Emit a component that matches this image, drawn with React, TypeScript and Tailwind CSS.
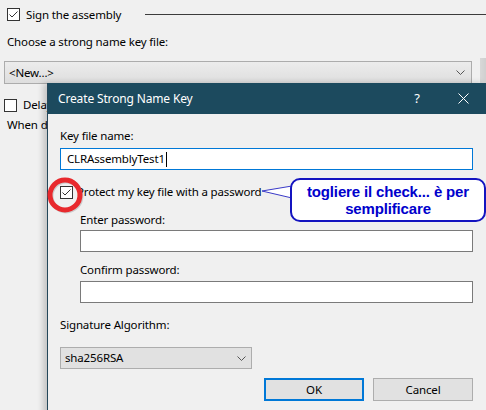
import React from 'react';

function Check({ checked = false }: { checked?: boolean }) {
  return (
    <div className="flex h-[13px] w-[13px] shrink-0 items-center justify-center border border-[#333333] bg-white">
      {checked && (
        <svg width="11" height="11" viewBox="0 0 11 11">
          <path d="M1.5 5.5 L4 8 L9.5 2.5" fill="none" stroke="#333333" strokeWidth="1" />
        </svg>
      )}
    </div>
  );
}

function Chevron() {
  return (
    <svg width="9" height="5" viewBox="0 0 9 5">
      <path d="M0.5 0.5 L4.5 4.5 L8.5 0.5" fill="none" stroke="#555555" strokeWidth="1" />
    </svg>
  );
}

function Dialog() {
  return (
    <div className="absolute left-[47px] top-[83px] h-[340px] w-[439px] border-l border-[#24475a] bg-[#f0f0f0] shadow-[-4px_0_6px_rgba(0,0,0,0.18)]">
      <div className="flex h-[31px] items-center bg-[#1c4a5e] pl-[10px] text-[12px] text-white">
        <span>Create Strong Name Key</span>
        <span className="ml-auto w-[46px] text-center text-[13px]">?</span>
        <span className="flex w-[46px] items-center justify-center">
          <svg width="11" height="11" viewBox="0 0 11 11">
            <path d="M0.5 0.5 L10.5 10.5 M10.5 0.5 L0.5 10.5" stroke="#ffffff" strokeWidth="1" />
          </svg>
        </span>
      </div>

      <div className="flex flex-col pl-[12px] pr-[13px]">
        <div className="mt-[14px] h-[16px] leading-[16px]">Key file name:</div>
        <div className="mt-[4px] flex h-[22px] items-center border border-[#0078d7] bg-white pl-[6px]">
          <span>CLRAssemblyTest1</span>
          <span className="ml-[1px] h-[15px] w-px bg-black" />
        </div>

        <div className="mt-[14px] flex h-[16px] items-center gap-[4px]">
          <Check checked />
          <span className="leading-[16px]">Protect my key file with a password</span>
        </div>

        <div className="ml-[20px] flex flex-col">
          <div className="mt-[12px] h-[16px] leading-[16px]">Enter password:</div>
          <div className="mt-[2px] h-[22px] border border-[#7a7a7a] bg-white" />
          <div className="mt-[10px] h-[16px] leading-[16px]">Confirm password:</div>
          <div className="mt-[3px] h-[22px] border border-[#7a7a7a] bg-white" />
        </div>

        <div className="mt-[14px] h-[16px] leading-[16px]">Signature Algorithm:</div>
        <div className="mt-[14px] flex h-[22px] w-[192px] items-center justify-between border border-[#adadad] bg-[#e1e1e1] pl-[4px] pr-[5px]">
          <span>sha256RSA</span>
          <Chevron />
        </div>

        <div className="mt-[9px] flex justify-end gap-[9px]">
          <div className="flex h-[23px] w-[100px] items-center justify-center border-2 border-[#0078d7] bg-[#e1e1e1]">OK</div>
          <div className="flex h-[23px] w-[100px] items-center justify-center border border-[#adadad] bg-[#e1e1e1]">Cancel</div>
        </div>
      </div>
    </div>
  );
}

function Callout() {
  return (
    <>
      <svg className="absolute left-[258px] top-[180px]" width="40" height="24" viewBox="0 0 40 24">
        <polygon points="4,11 34,6 34,18" fill="#ffffff" stroke="#3a3ac8" strokeWidth="1" />
      </svg>
      <div className="absolute left-[290px] top-[178px] flex h-[44px] w-[196px] flex-col items-center justify-center rounded-[10px] border-2 border-[#1414c0] bg-white font-['Liberation_Sans',Arial,sans-serif] text-[15px] font-bold leading-[17px] text-[#0000cc]">
        <span>togliere il check... è per</span>
        <span>semplificare</span>
      </div>
    </>
  );
}

export default function App() {
  return (
    <div className="relative h-[410px] w-[486px] overflow-hidden bg-[#f0f0f0] font-['Noto_Sans',sans-serif] text-[11.5px] tracking-[-0.15px] text-black">
      <div className="flex flex-col">
        <div className="mt-[8px] flex h-[13px] items-center pl-[7px]">
          <Check checked />
          <span className="ml-[6px] leading-[16px]">Sign the assembly</span>
          <div className="ml-[24px] h-px flex-1 bg-[#3c3c3c]" />
        </div>

        <div className="mt-[13px] h-[16px] pl-[7px] leading-[16px]">Choose a strong name key file:</div>

        <div className="mt-[8px] flex items-stretch">
          <div className="ml-[4px] mt-[3px] flex h-[23px] w-[468px] items-center justify-between border border-[#acacac] bg-gradient-to-b from-[#ececec] to-[#dedede] pl-[4px] pr-[6px]">
            <span>&lt;New...&gt;</span>
            <Chevron />
          </div>
          <div className="ml-[8px] h-[28px] flex-1 bg-gradient-to-r from-[#d8d8d8] to-[#cfcfcf]" />
        </div>

        <div className="mt-[11px] flex h-[16px] items-center pl-[4px]">
          <Check />
          <span className="ml-[6px] w-[24px] overflow-hidden whitespace-nowrap leading-[16px]">Delay sign only</span>
        </div>

        <div className="mt-[4px] w-[47px] overflow-hidden whitespace-nowrap pl-[7px] leading-[16px]">
          When delay signed, the project will not run or be debuggable
        </div>
      </div>

      <Dialog />

      <Callout />

      <svg className="absolute left-[45px] top-[174px]" width="42" height="42" viewBox="0 0 42 42">
        <circle cx="21" cy="22" r="15" fill="none" stroke="rgba(0,0,0,0.15)" strokeWidth="5" />
        <circle cx="20" cy="21" r="15" fill="none" stroke="#e8292d" strokeWidth="5" />
      </svg>
    </div>
  );
}
